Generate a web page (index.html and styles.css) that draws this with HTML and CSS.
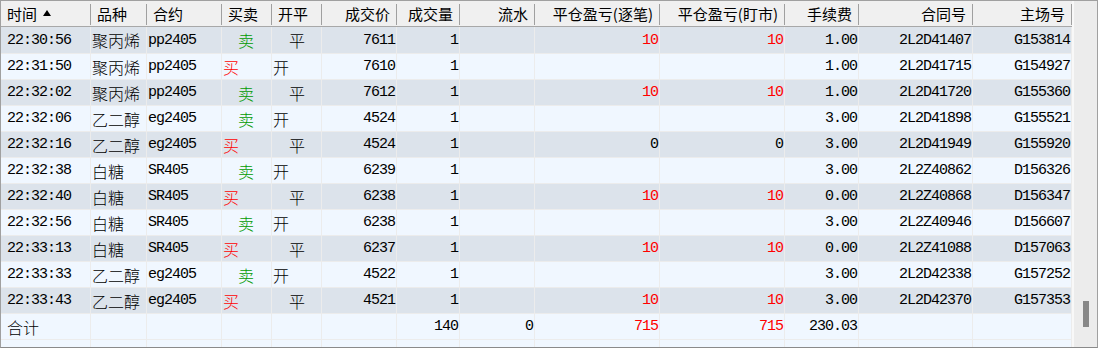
FILE: index.html
```html
<!DOCTYPE html>
<html lang="zh">
<head>
<meta charset="utf-8">
<title>成交记录</title>
<link rel="stylesheet" href="styles.css">
</head>
<body>
<div class="frame">
  <div class="table">
    <div class="hdr">
      <div class="h c1 l">时间<svg class="sort" width="8" height="6" viewBox="0 0 8 6"><path d="M4 0 L8 6 L0 6 Z" fill="#000"/></svg></div>
      <div class="h c2 l">品种</div>
      <div class="h c3 l">合约</div>
      <div class="h c4 l">买卖</div>
      <div class="h c5 l">开平</div>
      <div class="h c6 r">成交价</div>
      <div class="h c7 r">成交量</div>
      <div class="h c8 r">流水</div>
      <div class="h c9 r">平仓盈亏(逐笔)</div>
      <div class="h c10 r">平仓盈亏(盯市)</div>
      <div class="h c11 r">手续费</div>
      <div class="h c12 r">合同号</div>
      <div class="h c13 r">主场号</div>
    </div>

    <div class="row dark">
      <div class="d c1 t">22:30:56</div><div class="d c2 cn">聚丙烯</div><div class="d c3 m">pp2405</div>
      <div class="d c4 cn sell">卖</div><div class="d c5 cn close">平</div>
      <div class="d c6 n">7611</div><div class="d c7 n">1</div><div class="d c8 n"></div>
      <div class="d c9 n red">10</div><div class="d c10 n red">10</div><div class="d c11 n">1.00</div>
      <div class="d c12 n">2L2D41407</div><div class="d c13 n">G153814</div>
    </div>
    <div class="row">
      <div class="d c1 t">22:31:50</div><div class="d c2 cn">聚丙烯</div><div class="d c3 m">pp2405</div>
      <div class="d c4 cn buy">买</div><div class="d c5 cn open">开</div>
      <div class="d c6 n">7610</div><div class="d c7 n">1</div><div class="d c8 n"></div>
      <div class="d c9 n"></div><div class="d c10 n"></div><div class="d c11 n">1.00</div>
      <div class="d c12 n">2L2D41715</div><div class="d c13 n">G154927</div>
    </div>
    <div class="row dark">
      <div class="d c1 t">22:32:02</div><div class="d c2 cn">聚丙烯</div><div class="d c3 m">pp2405</div>
      <div class="d c4 cn sell">卖</div><div class="d c5 cn close">平</div>
      <div class="d c6 n">7612</div><div class="d c7 n">1</div><div class="d c8 n"></div>
      <div class="d c9 n red">10</div><div class="d c10 n red">10</div><div class="d c11 n">1.00</div>
      <div class="d c12 n">2L2D41720</div><div class="d c13 n">G155360</div>
    </div>
    <div class="row">
      <div class="d c1 t">22:32:06</div><div class="d c2 cn">乙二醇</div><div class="d c3 m">eg2405</div>
      <div class="d c4 cn sell">卖</div><div class="d c5 cn open">开</div>
      <div class="d c6 n">4524</div><div class="d c7 n">1</div><div class="d c8 n"></div>
      <div class="d c9 n"></div><div class="d c10 n"></div><div class="d c11 n">3.00</div>
      <div class="d c12 n">2L2D41898</div><div class="d c13 n">G155521</div>
    </div>
    <div class="row dark">
      <div class="d c1 t">22:32:16</div><div class="d c2 cn">乙二醇</div><div class="d c3 m">eg2405</div>
      <div class="d c4 cn buy">买</div><div class="d c5 cn close">平</div>
      <div class="d c6 n">4524</div><div class="d c7 n">1</div><div class="d c8 n"></div>
      <div class="d c9 n">0</div><div class="d c10 n">0</div><div class="d c11 n">3.00</div>
      <div class="d c12 n">2L2D41949</div><div class="d c13 n">G155920</div>
    </div>
    <div class="row">
      <div class="d c1 t">22:32:38</div><div class="d c2 cn">白糖</div><div class="d c3 m">SR405</div>
      <div class="d c4 cn sell">卖</div><div class="d c5 cn open">开</div>
      <div class="d c6 n">6239</div><div class="d c7 n">1</div><div class="d c8 n"></div>
      <div class="d c9 n"></div><div class="d c10 n"></div><div class="d c11 n">3.00</div>
      <div class="d c12 n">2L2Z40862</div><div class="d c13 n">D156326</div>
    </div>
    <div class="row dark">
      <div class="d c1 t">22:32:40</div><div class="d c2 cn">白糖</div><div class="d c3 m">SR405</div>
      <div class="d c4 cn buy">买</div><div class="d c5 cn close">平</div>
      <div class="d c6 n">6238</div><div class="d c7 n">1</div><div class="d c8 n"></div>
      <div class="d c9 n red">10</div><div class="d c10 n red">10</div><div class="d c11 n">0.00</div>
      <div class="d c12 n">2L2Z40868</div><div class="d c13 n">D156347</div>
    </div>
    <div class="row">
      <div class="d c1 t">22:32:56</div><div class="d c2 cn">白糖</div><div class="d c3 m">SR405</div>
      <div class="d c4 cn sell">卖</div><div class="d c5 cn open">开</div>
      <div class="d c6 n">6238</div><div class="d c7 n">1</div><div class="d c8 n"></div>
      <div class="d c9 n"></div><div class="d c10 n"></div><div class="d c11 n">3.00</div>
      <div class="d c12 n">2L2Z40946</div><div class="d c13 n">D156607</div>
    </div>
    <div class="row dark">
      <div class="d c1 t">22:33:13</div><div class="d c2 cn">白糖</div><div class="d c3 m">SR405</div>
      <div class="d c4 cn buy">买</div><div class="d c5 cn close">平</div>
      <div class="d c6 n">6237</div><div class="d c7 n">1</div><div class="d c8 n"></div>
      <div class="d c9 n red">10</div><div class="d c10 n red">10</div><div class="d c11 n">0.00</div>
      <div class="d c12 n">2L2Z41088</div><div class="d c13 n">D157063</div>
    </div>
    <div class="row">
      <div class="d c1 t">22:33:33</div><div class="d c2 cn">乙二醇</div><div class="d c3 m">eg2405</div>
      <div class="d c4 cn sell">卖</div><div class="d c5 cn open">开</div>
      <div class="d c6 n">4522</div><div class="d c7 n">1</div><div class="d c8 n"></div>
      <div class="d c9 n"></div><div class="d c10 n"></div><div class="d c11 n">3.00</div>
      <div class="d c12 n">2L2D42338</div><div class="d c13 n">G157252</div>
    </div>
    <div class="row dark">
      <div class="d c1 t">22:33:43</div><div class="d c2 cn">乙二醇</div><div class="d c3 m">eg2405</div>
      <div class="d c4 cn buy">买</div><div class="d c5 cn close">平</div>
      <div class="d c6 n">4521</div><div class="d c7 n">1</div><div class="d c8 n"></div>
      <div class="d c9 n red">10</div><div class="d c10 n red">10</div><div class="d c11 n">3.00</div>
      <div class="d c12 n">2L2D42370</div><div class="d c13 n">G157353</div>
    </div>
    <div class="row">
      <div class="d c1 cn tcn">合计</div><div class="d c2"></div><div class="d c3"></div>
      <div class="d c4"></div><div class="d c5"></div>
      <div class="d c6 n"></div><div class="d c7 n">140</div><div class="d c8 n">0</div>
      <div class="d c9 n red">715</div><div class="d c10 n red">715</div><div class="d c11 n">230.03</div>
      <div class="d c12 n"></div><div class="d c13 n"></div>
    </div>
    <div class="row">
      <div class="d c1"></div><div class="d c2"></div><div class="d c3"></div>
      <div class="d c4"></div><div class="d c5"></div><div class="d c6"></div>
      <div class="d c7"></div><div class="d c8"></div><div class="d c9"></div>
      <div class="d c10"></div><div class="d c11"></div><div class="d c12"></div>
      <div class="d c13"></div>
    </div>
  </div>
  <div class="vscroll"><div class="thumb"></div></div>
</div>
</body>
</html>
```

FILE: styles.css
```css
html, body {
  margin: 0;
  padding: 0;
  background: #ffffff;
}

.frame {
  box-sizing: border-box;
  width: 1098px;
  height: 348px;
  border: 1px solid #a0a0a0;
  border-bottom-color: #8a8a8a;
  display: flex;
  overflow: hidden;
  background: #f0f7ff;
}

.table {
  width: 1071px;
  flex: 0 0 1071px;
  display: flex;
  flex-direction: column;
  overflow: hidden;
}

.hdr {
  display: flex;
  flex: 0 0 26px;
  height: 26px;
  box-sizing: border-box;
  border-bottom: 1px solid #a8a8a8;
  background: #f0f0f0;
}

.h {
  box-sizing: border-box;
  height: 25px;
  padding-top: 1px;
  line-height: 24px;
  font-family: "Noto Sans CJK SC", "Noto Sans", sans-serif;
  font-size: 15px;
  color: #000;
  white-space: nowrap;
  overflow: hidden;
  background: linear-gradient(#a0a0a0, #a0a0a0) right 3px / 1px 21px no-repeat;
  display: flex;
  align-items: center;
}

.h.l { padding-left: 6px; justify-content: flex-start; }
.h.r { padding-right: 7px; justify-content: flex-end; }

.sort { margin-left: 6px; margin-top: -2px; }

.row {
  display: flex;
  flex: 0 0 26px;
  height: 26px;
  box-sizing: border-box;
  border-top: 1px solid #ececec;
  background: #f0f7ff;
}

.hdr + .row { border-top: 0; }

.row.dark { background: #dce3eb; }

.d {
  box-sizing: border-box;
  border-right: 1px solid #ececec;
  white-space: nowrap;
  overflow: hidden;
  color: #000;
  display: flex;
  align-items: center;
}

.c1 { width: 90px; flex: 0 0 90px; }
.c2 { width: 56px; flex: 0 0 56px; }
.c3 { width: 75px; flex: 0 0 75px; }
.c4 { width: 50px; flex: 0 0 50px; }
.c5 { width: 50px; flex: 0 0 50px; }
.c6 { width: 75px; flex: 0 0 75px; }
.c7 { width: 63px; flex: 0 0 63px; }
.c8 { width: 75px; flex: 0 0 75px; }
.c9 { width: 125px; flex: 0 0 125px; }
.c10 { width: 125px; flex: 0 0 125px; }
.c11 { width: 74px; flex: 0 0 74px; }
.c12 { width: 114px; flex: 0 0 114px; }
.c13 { width: 99px; flex: 0 0 99px; }

.t, .m, .n {
  font-family: "Liberation Mono", "DejaVu Sans Mono", monospace;
  font-size: 15px;
  letter-spacing: -1px;
}

.t { padding-left: 6px; }
.m { padding-left: 1px; }
.n { justify-content: flex-end; padding-right: 1px; }

.cn {
  font-family: "Noto Sans CJK SC", "Noto Sans", sans-serif;
  font-size: 16px;
  font-weight: 300;
  padding-left: 1px;
}

.tcn { padding-left: 6px; }

.sell { padding-left: 16px; color: #009a00; }
.buy { padding-left: 1px; color: #ff0000; }
.close { padding-left: 17px; }
.open { padding-left: 1px; }

.red { color: #ff0000; }

.vscroll {
  flex: 0 0 25px;
  width: 25px;
  box-sizing: border-box;
  border-left: 2px solid #f8f8f8;
  background: #ececec;
  display: flex;
  flex-direction: column;
  align-items: flex-start;
  padding-left: 9px;
}

.thumb {
  margin-top: 300px;
  width: 6px;
  height: 26px;
  background: #888888;
}
```
